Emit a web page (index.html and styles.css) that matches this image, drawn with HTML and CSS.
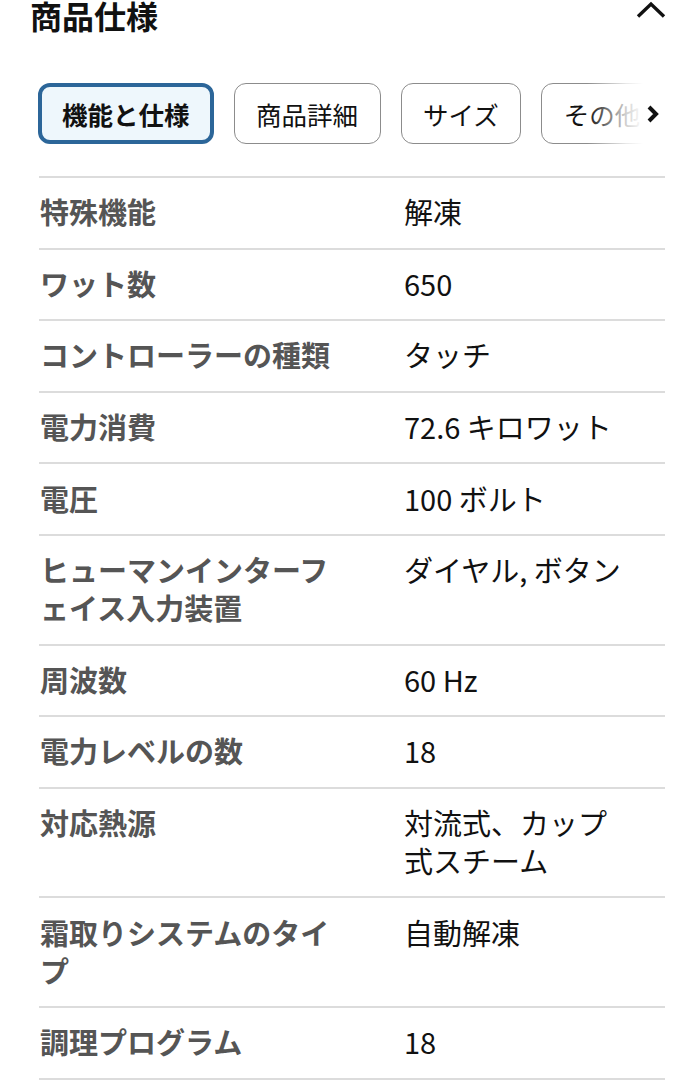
FILE: index.html
```html
<!DOCTYPE html>
<html lang="ja">
<head>
<meta charset="utf-8">
<title>商品仕様</title>
<link rel="stylesheet" href="styles.css">
</head>
<body>
<div class="page">
  <div class="header">
    <h2 class="title">商品仕様</h2>
    <svg class="collapse" width="30" height="18" viewBox="0 0 30 18"><path d="M2 15.5 L15 3 L28 15.5" fill="none" stroke="#111" stroke-width="3.4" stroke-linejoin="miter"/></svg>
  </div>
  <div class="tabs-wrap">
    <div class="tabs">
      <div class="tab active">機能と仕様</div>
      <div class="tab">商品詳細</div>
      <div class="tab">サイズ</div>
      <div class="tab">その他の情報</div>
    </div>
    <div class="fade">
      <svg width="18" height="20" viewBox="0 0 18 20"><path d="M5 3 L12 10 L5 17" fill="none" stroke="#111" stroke-width="4"/></svg>
    </div>
  </div>
  <div class="specs">
    <div class="row"><div class="k">特殊機能</div><div class="v">解凍</div></div>
    <div class="row"><div class="k">ワット数</div><div class="v">650</div></div>
    <div class="row"><div class="k">コントローラーの種類</div><div class="v">タッチ</div></div>
    <div class="row"><div class="k">電力消費</div><div class="v">72.6 キロワット</div></div>
    <div class="row"><div class="k">電圧</div><div class="v">100 ボルト</div></div>
    <div class="row"><div class="k">ヒューマンインターフェイス入力装置</div><div class="v">ダイヤル, ボタン</div></div>
    <div class="row"><div class="k">周波数</div><div class="v">60 Hz</div></div>
    <div class="row"><div class="k">電力レベルの数</div><div class="v">18</div></div>
    <div class="row"><div class="k">対応熱源</div><div class="v">対流式、カップ式スチーム</div></div>
    <div class="row"><div class="k">霜取りシステムのタイプ</div><div class="v">自動解凍</div></div>
    <div class="row"><div class="k">調理プログラム</div><div class="v">18</div></div>
  </div>
</div>
</body>
</html>
```

FILE: styles.css
```css
* { box-sizing: border-box; }
html, body { margin: 0; padding: 0; background: #fff; }
body {
  font-family: "Noto Sans CJK JP", "Noto Sans", sans-serif;
  color: #111;
  width: 694px;
  overflow: hidden;
}
.page {
  padding: 0 29px 0 39px;
}
.header {
  display: flex;
  justify-content: space-between;
  align-items: flex-start;
  margin-left: -9px;
  margin-top: -6px;
  height: 90px;
}
.title {
  margin: 0;
  font-size: 32px;
  line-height: 42px;
  font-weight: 700;
  color: #111;
}
.collapse {
  margin-top: 7px;
  margin-right: -1px;
}
.tabs-wrap {
  position: relative;
  overflow: hidden;
  margin-left: -1px;
  margin-top: -1px;
}
.tabs {
  display: flex;
  gap: 20px;
  white-space: nowrap;
  width: 800px;
}
.tab {
  height: 61px;
  display: flex;
  align-items: center;
  padding: 0 21.5px;
  border: 1.5px solid #8c8c8c;
  border-radius: 12px;
  font-size: 25.5px;
  color: #111;
  background: #fff;
  flex: none;
}
.tab.active {
  border: 4px solid #2c6699;
  background: #eef7fc;
  font-weight: 700;
  padding: 0 20px;
}
.fade {
  position: absolute;
  top: 0;
  right: 0;
  width: 78px;
  height: 61px;
  background: linear-gradient(to right, rgba(255,255,255,0) 0%, rgba(255,255,255,0.8) 50%, #fff 72%);
  display: flex;
  align-items: center;
  justify-content: flex-end;
  padding-right: 3px;
}
.specs {
  margin-top: 32px;
  border-top: 2px solid #dcdcdc;
}
.row {
  display: grid;
  grid-template-columns: 365px 1fr;
  border-bottom: 2px solid #dcdcdc;
  padding: 14.3px 0 17.3px;
  font-size: 29px;
  line-height: 38px;
}
.k {
  font-weight: 700;
  color: #555;
  padding-right: 58px;
  padding-left: 1px;
}
.v {
  color: #111;
  padding-right: 33px;
}
```
